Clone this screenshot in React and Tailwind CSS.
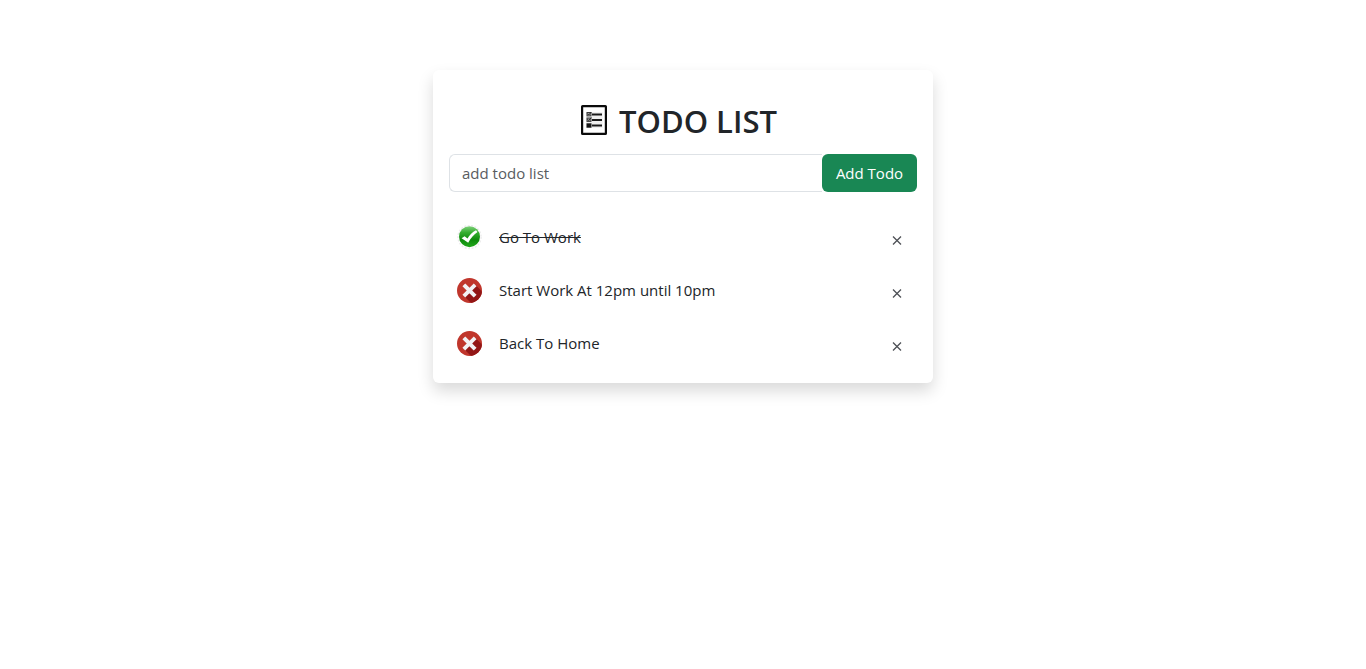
import { useState } from "react";

const initialTodos = [
  { id: 1, text: "Go To Work", done: true },
  { id: 2, text: "Start Work At 12pm until 10pm", done: false },
  { id: 3, text: "Back To Home", done: false },
];

function ListIcon() {
  return (
    <svg viewBox="0 0 26 30" className="h-[30px] w-[26px]" aria-hidden="true">
      <rect x="1.1" y="1.1" width="23.8" height="27.8" rx="0.5" fill="#fff" stroke="#0b0b0b" strokeWidth="2.2" />
      <rect x="5" y="7" width="16.5" height="16" fill="#f0f0f0" />
      <g fill="#999" stroke="#3c3c3c" strokeWidth="1">
        <rect x="6" y="7.5" width="4" height="3.4" />
        <rect x="6" y="13" width="4" height="3.4" />
      </g>
      <rect x="5.5" y="18.3" width="5" height="4.4" fill="#151515" />
      <path d="M6.5 8.8l1.2 1.2 2.6-3M6.5 14.3l1.2 1.2 2.6-3" fill="none" stroke="#222" strokeWidth="0.9" />
      <path d="M11 9.5h10M11 15h10M11 20.5h10" stroke="#1a1a1a" strokeWidth="1.8" />
    </svg>
  );
}

function DoneIcon() {
  return (
    <svg viewBox="0 0 25 25" className="h-[25px] w-[25px]" aria-hidden="true">
      <defs>
        <linearGradient id="done-fill" x1="0" y1="0" x2="0" y2="1">
          <stop offset="0" stopColor="#7fd07b" />
          <stop offset="0.3" stopColor="#35ae30" />
          <stop offset="0.65" stopColor="#0d8a0b" />
          <stop offset="1" stopColor="#22a81c" />
        </linearGradient>
      </defs>
      <circle cx="12.5" cy="12" r="11.6" fill="none" stroke="#ececec" strokeWidth="1.4" strokeDasharray="2 1.5" />
      <circle cx="12.5" cy="11.7" r="10.5" fill="url(#done-fill)" />
      <path d="M4.6 13.2l3-2 2.9 2.4c2-3.6 4.9-6.5 8.5-8.4l1.5 1.9c-4 3-6.8 6.3-9.3 10.6z" fill="#fff" />
    </svg>
  );
}

function PendingIcon() {
  return (
    <svg viewBox="0 0 25 25" className="h-[25px] w-[25px]" aria-hidden="true">
      <defs>
        <clipPath id="pending-clip">
          <circle cx="12.5" cy="12.5" r="12.5" />
        </clipPath>
      </defs>
      <circle cx="12.5" cy="12.5" r="12.5" fill="#c0362c" />
      <path d="M18.5 7L26 14.5V26H15L7 18l5.5-5.5z" fill="#921616" clipPath="url(#pending-clip)" />
      <path d="M8.2 8.2l8.6 8.6M16.8 8.2l-8.6 8.6" stroke="#f2f2f4" strokeWidth="3.9" strokeLinecap="square" />
    </svg>
  );
}

function TodoItem({ todo, onToggle, onRemove }) {
  return (
    <li className="flex h-[53px] items-center pr-[14px] pl-2">
      <button
        type="button"
        onClick={onToggle}
        aria-label={todo.done ? "Mark as not done" : "Mark as done"}
        className="shrink-0"
      >
        {todo.done ? <DoneIcon /> : <PendingIcon />}
      </button>
      <span className={todo.done ? "ml-[17px] grow pb-0.5 line-through" : "ml-[17px] grow pb-0.5"}>{todo.text}</span>
      <button type="button" onClick={onRemove} aria-label={"Remove " + todo.text} className="mt-1 shrink-0">
        <svg viewBox="0 0 12 12" className="h-3 w-3" aria-hidden="true">
          <path d="M2 2.5l8 8M10 2.5l-8 8" stroke="#4d5055" strokeWidth="1.3" />
        </svg>
      </button>
    </li>
  );
}

export default function App() {
  const [todos, setTodos] = useState(initialTodos);
  const [text, setText] = useState("");

  const addTodo = (event) => {
    event.preventDefault();
    if (!text.trim()) return;
    setTodos([...todos, { id: Date.now(), text: text.trim(), done: false }]);
    setText("");
  };

  const toggle = (id) => setTodos(todos.map((t) => (t.id === id ? { ...t, done: !t.done } : t)));
  const remove = (id) => setTodos(todos.filter((t) => t.id !== id));

  return (
    <main className="min-h-screen bg-white px-4 pt-[70px] font-['Open_Sans','Noto_Sans',sans-serif] text-[15px] leading-6 text-[#212529]">
      <section className="mx-auto max-w-[500px] rounded-md bg-white px-4 pt-8 pb-[13px] shadow-[0_8px_16px_rgba(0,0,0,0.15)]">
        <h1 className="flex h-9 items-center justify-center gap-3 pr-2 text-[31px] font-semibold">
          <ListIcon />
          <span className="pt-0.5">TODO LIST</span>
        </h1>
        <form onSubmit={addTodo} className="mt-4 flex h-[38px]">
          <input
            type="text"
            aria-label="New todo"
            placeholder="add todo list"
            value={text}
            onChange={(event) => setText(event.target.value)}
            className="min-w-0 grow rounded-l-md border border-r-0 border-[#dee2e6] px-3 placeholder:text-[#595c5f]"
          />
          <button type="submit" className="w-[95px] shrink-0 rounded-md bg-[#198754] text-white">
            Add Todo
          </button>
        </form>
        <ul className="mt-[19px]">
          {todos.map((todo) => (
            <TodoItem key={todo.id} todo={todo} onToggle={() => toggle(todo.id)} onRemove={() => remove(todo.id)} />
          ))}
        </ul>
      </section>
    </main>
  );
}
